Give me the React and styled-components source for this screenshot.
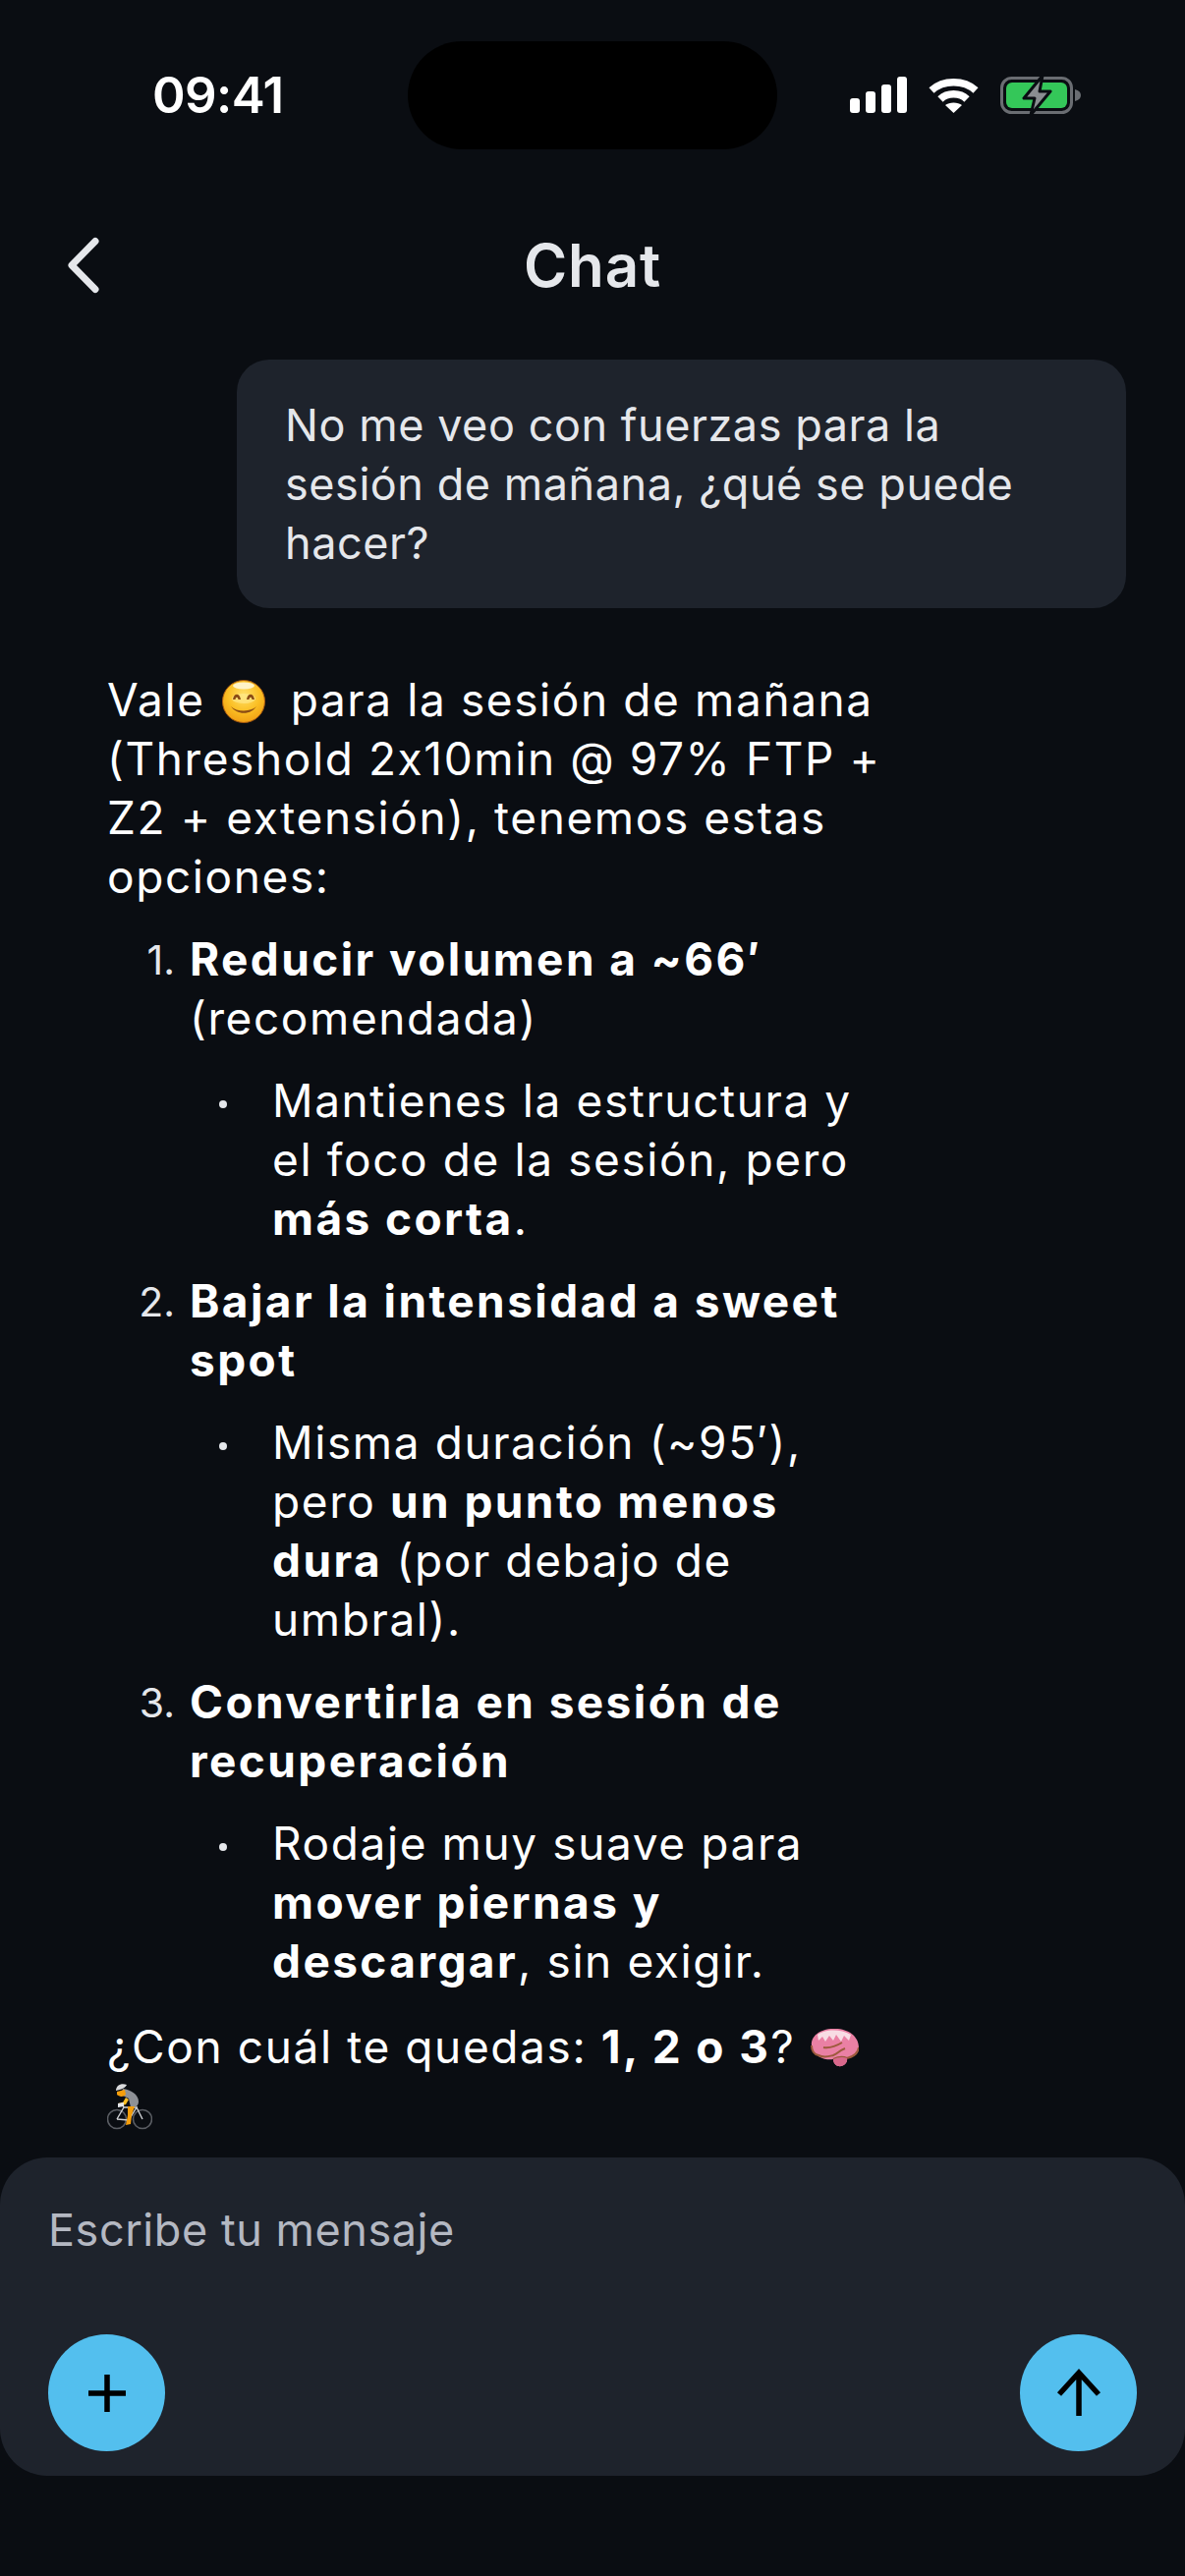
import React from 'react';
import styled, { createGlobalStyle } from 'styled-components';

const Global = createGlobalStyle`
  html, body {
    margin: 0;
    padding: 0;
    background: #0a0d12;
  }
  * {
    box-sizing: border-box;
  }
`;

const Page = styled.div`
  width: 1206px;
  height: 2622px;
  background: #0a0d12;
  display: flex;
  flex-direction: column;
  overflow: hidden;
  font-family: Inter, "Noto Sans", sans-serif;
  color: #fff;
`;

const StatusBar = styled.div`
  flex: none;
  display: grid;
  grid-template-columns: 415px 376px 1fr;
  align-items: center;
  padding-top: 42px;
  height: 152px;
`;

const Time = styled.div`
  padding-left: 155px;
  font-size: 51px;
  font-weight: 600;
  line-height: 60px;
  letter-spacing: -0.6px;
`;

const Island = styled.div`
  height: 110px;
  border-radius: 55px;
  background: #000;
`;

const StatusIcons = styled.div`
  display: flex;
  align-items: center;
  padding-left: 74px;
  gap: 22px;
`;

const Header = styled.header`
  flex: none;
  display: grid;
  grid-template-columns: 1fr auto 1fr;
  align-items: center;
  height: 80px;
  margin-top: 78px;
  margin-bottom: 56px;
`;

const BackIcon = styled.svg`
  display: block;
  width: 44px;
  height: 64px;
  margin-left: 60px;
  fill: none;
  stroke: #e5e7eb;
  stroke-width: 7;
  stroke-linecap: round;
  stroke-linejoin: round;
`;

const Title = styled.h1`
  margin: 0;
  font-size: 60px;
  font-weight: 600;
  line-height: 80px;
  letter-spacing: 0.8px;
  color: #e5e7eb;
`;

const Messages = styled.main`
  flex: 1;
  min-height: 0;
  overflow: hidden;
`;

const UserBubble = styled.div`
  margin: 0 60px 0 241px;
  padding: 37px 40px 36px 49px;
  border-radius: 33px;
  background: #1e232c;
  font-size: 45px;
  line-height: 60px;
  letter-spacing: 0.55px;
  color: #e5e7eb;
`;

const Reply = styled.div`
  margin-top: 63px;
  padding: 0 301px 0 109px;
  font-size: 46px;
  line-height: 60px;
  letter-spacing: 1.6px;
  color: #fff;

  strong {
    font-weight: 700;
    letter-spacing: 2.4px;
  }
`;

const Para = styled.p`
  margin: ${(p) => (p.$last ? '27px 0 0' : '0')};
`;

const List = styled.div`
  margin-top: 24px;
`;

const Item = styled.div`
  display: grid;
  grid-template-columns: 84px 1fr;
  margin-top: 24px;
`;

const Mark = styled.span`
  padding: 1px 15px 0 0;
  font-size: 41px;
  text-align: right;
  color: #e5e7eb;
  letter-spacing: 0;
`;

const Bullet = styled.span`
  display: block;
  width: 8px;
  height: 8px;
  margin: 30px 0 0 30px;
  border-radius: 50%;
  background: #e5e7eb;
`;

const Emoji = styled.svg`
  display: inline-block;
  width: ${(p) => p.$w || 44}px;
  height: ${(p) => p.$h || 44}px;
  vertical-align: ${(p) => p.$drop || -7}px;
  margin-left: ${(p) => p.$before || 0}px;
  margin-right: ${(p) => p.$gap || 0}px;
`;

const Composer = styled.section`
  flex: none;
  height: 324px;
  margin-bottom: 102px;
  padding: 44px 49px 25px;
  display: flex;
  flex-direction: column;
  justify-content: space-between;
  border-radius: 48px;
  background: #1e232c;
`;

const Placeholder = styled.div`
  font-size: 45px;
  line-height: 60px;
  letter-spacing: 0.55px;
  color: #b4b8c2;
`;

const Actions = styled.div`
  display: flex;
  justify-content: space-between;
`;

const RoundButton = styled.button`
  width: 119px;
  height: 119px;
  padding: 0;
  border: none;
  border-radius: 50%;
  background: #53bfee;
  display: flex;
  align-items: center;
  justify-content: center;

  svg {
    display: block;
    width: 64px;
    height: 64px;
    fill: none;
    stroke: #000;
    stroke-width: 5.5;
  }
`;

const Signal = () => (
  <svg width="58" height="38" viewBox="0 0 58 38" fill="#fff">
    <rect x="0" y="22" width="10" height="15" rx="3" />
    <rect x="16" y="15" width="10" height="22" rx="3" />
    <rect x="32" y="8" width="10" height="29" rx="3" />
    <rect x="48" y="0" width="10" height="37" rx="3" />
  </svg>
);

const Wifi = () => (
  <svg width="51" height="38" viewBox="0 0 51 38" fill="none" stroke="#fff" strokeWidth="7.5">
    <path d="M3 14 C15 3 36 3 48 14" />
    <path d="M12 23 C19 16 32 16 39 23" />
    <path d="M25.5 37 L17 29 C21 25.5 30 25.5 34 29 Z" fill="#fff" stroke="none" />
  </svg>
);

const Battery = () => (
  <svg width="82" height="42" viewBox="0 0 82 42">
    <rect x="1.5" y="3.5" width="71" height="35" rx="10" fill="none" stroke="#6a6d72" strokeWidth="3" />
    <rect x="6" y="8" width="62" height="26" rx="6" fill="#34c759" />
    <path d="M76 15 C80 16 82 18 82 21 C82 24 80 26 76 27 Z" fill="#6a6d72" />
    <path d="M43 1 L24 24 L35 24 L31 41 L51 17 L40 17 Z" fill="#8a8d91" stroke="#0a0d12" strokeWidth="3" strokeLinejoin="round" />
  </svg>
);

const Smile = () => (
  <Emoji viewBox="0 0 44 44" $before={3} $gap={11}>
    <defs>
      <radialGradient id="smileFace" cx="50%" cy="35%" r="70%">
        <stop offset="0" stopColor="#ffe06a" />
        <stop offset="0.55" stopColor="#fbbf24" />
        <stop offset="1" stopColor="#ef9a12" />
      </radialGradient>
    </defs>
    <circle cx="22" cy="22" r="21.5" fill="url(#smileFace)" stroke="#a85a10" strokeWidth="1" />
    <ellipse cx="22" cy="6" rx="11" ry="3.5" fill="#fff3c8" />
    <ellipse cx="22" cy="19" rx="12" ry="5" fill="#ffe88a" opacity="0.7" />
    <path d="M11 20 C12 13 18 13 19 20 L16.5 20 C16 17 14 17 13.5 20 Z" fill="#8a4b14" />
    <path d="M25 20 C26 13 32 13 33 20 L30.5 20 C30 17 28 17 27.5 20 Z" fill="#8a4b14" />
    <path d="M9 27 C15 33 29 33 35 27 C29 36 15 36 9 27 Z" fill="#8a4b14" />
  </Emoji>
);

const Brain = () => (
  <Emoji viewBox="0 0 50 40" $w={50} $h={40} $drop={-4}>
    <path d="M2 18 C1 9 10 1 24 1 C38 0 50 8 50 20 C50 28 42 30 38 31 C39 36 34 40 29 39 C25 38 24 34 24 32 C17 33 10 31 7 27 C3 25 2 22 2 18 Z" fill="#ea80a4" />
    <path d="M8 7 C14 2 30 0 42 7 L40 13 L35 8 L32 14 L27 7 L24 13 L20 8 L16 14 L13 9 L9 13 Z" fill="#f8dce4" />
    <path d="M2 18 C2 24 5 27 9 28 C15 31 20 29 24 28 C30 26 28 24 36 21 M24 32 C28 30 34 29 38 31 M14 20 C20 21 28 18 33 15 M38 31 C42 30 49 27 50 20" fill="none" stroke="#9c5a3c" strokeWidth="2" />
    <path d="M29 39 C25 38 24 34 24 32 C28 30 34 29 38 31 C39 36 34 40 29 39 Z" fill="#d9688c" />
  </Emoji>
);

const Cyclist = () => (
  <Emoji viewBox="0 0 46 48" $w={46} $h={48} $drop={-8}>
    <g fill="none" stroke="#5a5d63" strokeWidth="1.6">
      <circle cx="10" cy="37" r="9.5" />
      <circle cx="36" cy="37" r="9.5" />
    </g>
    <path d="M10 37 L17 25 L30 25 L22 38 L10 37 M30 25 L36 37 M17 25 L15 20" fill="none" stroke="#cfd1d4" strokeWidth="1.4" />
    <path d="M16 6 C24 7 32 12 32 19 C32 24 28 26 24 25 L22 16 L14 12 Z" fill="#8e9196" />
    <path d="M9 8 C9 3 14 0 20 2 C19 5 14 7 9 8 Z" fill="#d9dadc" />
    <path d="M10 9 L18 7 L19 12 C16 15 12 14 10 12 Z" fill="#f59e0b" />
    <path d="M19 15 L22 17 L19 22 L12 24 L11 21 L16 20 Z" fill="#fbbf24" />
    <path d="M21 24 L28 24 L25 33 L24 42 L19 43 L21 33 Z" fill="#f59e0b" />
    <path d="M11 21 L17 20 L17 24 L11 25 Z" fill="#e5e7eb" />
  </Emoji>
);

export default function App() {
  return (
    <Page>
      <Global />
      <StatusBar>
        <Time>09:41</Time>
        <Island />
        <StatusIcons>
          <Signal />
          <Wifi />
          <Battery />
        </StatusIcons>
      </StatusBar>

      <Header>
        <BackIcon viewBox="0 0 44 64">
          <path d="M37 7.5 L13 32 L37 56.5" />
        </BackIcon>
        <Title>Chat</Title>
        <span />
      </Header>

      <Messages>
        <UserBubble>No me veo con fuerzas para la sesión de mañana, ¿qué se puede hacer?</UserBubble>
        <Reply>
          <Para>
            Vale <Smile /> para la sesión de mañana (Threshold 2x10min @ 97% FTP + Z2 + extensión), tenemos estas opciones:
          </Para>
          <List>
            <Item>
              <Mark>1.</Mark>
              <div>
                <strong>Reducir volumen a ~66′</strong> (recomendada)
                <Item>
                  <Bullet />
                  <div>Mantienes la estructura y el foco de la sesión, pero <strong>más corta</strong>.</div>
                </Item>
              </div>
            </Item>
            <Item>
              <Mark>2.</Mark>
              <div>
                <strong>Bajar la intensidad a sweet spot</strong>
                <Item>
                  <Bullet />
                  <div>Misma duración (~95′), pero <strong>un punto menos dura</strong> (por debajo de umbral).</div>
                </Item>
              </div>
            </Item>
            <Item>
              <Mark>3.</Mark>
              <div>
                <strong>Convertirla en sesión de recuperación</strong>
                <Item>
                  <Bullet />
                  <div>Rodaje muy suave para <strong>mover piernas y descargar</strong>, sin exigir.</div>
                </Item>
              </div>
            </Item>
          </List>
          <Para $last>
            ¿Con cuál te quedas: <strong>1, 2 o 3</strong>? <Brain /> <Cyclist />
          </Para>
        </Reply>
      </Messages>

      <Composer>
        <Placeholder>Escribe tu mensaje</Placeholder>
        <Actions>
          <RoundButton aria-label="Añadir">
            <svg viewBox="0 0 64 64">
              <path d="M32 13 V51 M13 32 H51" />
            </svg>
          </RoundButton>
          <RoundButton aria-label="Enviar">
            <svg viewBox="0 0 64 64">
              <path d="M32 55 V11 M12 33 L32 11 L52 33" />
            </svg>
          </RoundButton>
        </Actions>
      </Composer>
    </Page>
  );
}
